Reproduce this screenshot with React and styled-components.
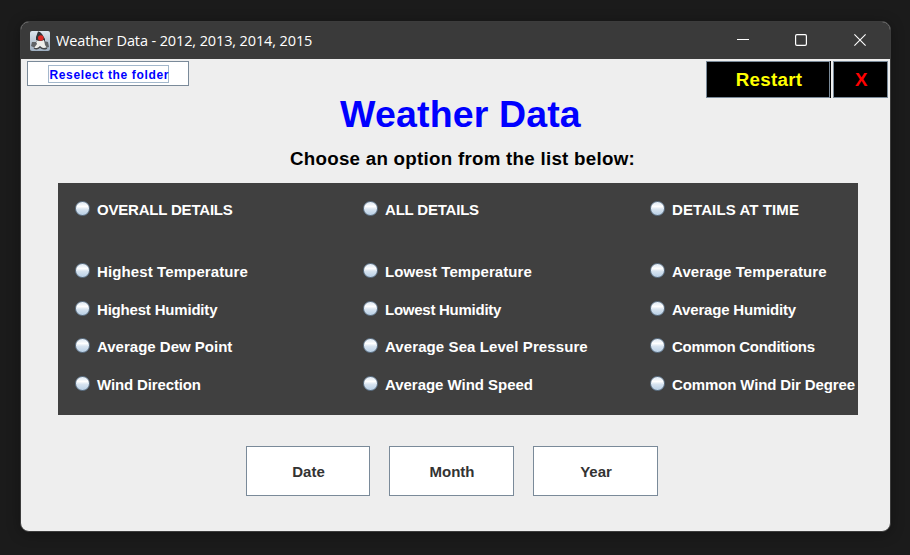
import React from "react";
import styled, { createGlobalStyle } from "styled-components";

const GlobalStyle = createGlobalStyle`
  * { box-sizing: border-box; }
  html, body { margin: 0; padding: 0; overflow: hidden; background: #1b1b1b; }
`;

const Desktop = styled.div`
  width: 910px;
  height: 555px;
  padding: 21px 19px 23px 20px;
  background: #1b1b1b;
  font-family: "Liberation Sans", Arial, sans-serif;
  font-weight: 700;
`;

const Window = styled.main`
  display: flex;
  flex-direction: column;
  width: 871px;
  height: 511px;
  border: 1px solid #3c3c3c;
  border-radius: 9px;
  overflow: hidden;
  background: #eeeeee;
  box-shadow: 0 2px 14px rgba(0, 0, 0, 0.3);
`;

const TitleBar = styled.header`
  display: flex;
  align-items: center;
  flex: 0 0 37px;
  padding-left: 9px;
  background: #3a3a3a;
  color: #ffffff;
`;

const WindowTitle = styled.h1`
  flex: 1;
  margin: 0 0 0 6px;
  font: 400 14.5px/20px "Open Sans", "Noto Sans", sans-serif;
  letter-spacing: -0.12px;
`;

const Controls = styled.div`
  display: flex;
  padding: 0 1px 1px 0;
`;

const Control = styled.button`
  display: grid;
  place-items: center;
  width: 58.5px;
  height: 35px;
  padding: 0;
  border: 0;
  background: transparent;
`;

const Toolbar = styled.nav`
  display: flex;
  align-items: flex-start;
  height: 39px;
  padding: 2px 2px 0 6px;
`;

const FolderButton = styled.button`
  display: grid;
  place-items: center;
  width: 162px;
  height: 25px;
  margin-right: auto;
  padding: 0;
  border: 1px solid #7a8a99;
  background: #ffffff;
  color: #0000ff;
  font: inherit;
`;

const FocusLabel = styled.span`
  width: 121px;
  height: 18px;
  border: 1px solid #a3b8cc;
  font-size: 12px;
  line-height: 18px;
  letter-spacing: 0.64px;
  white-space: nowrap;
  text-align: left;
  padding-left: 1px;
`;

const BlackButton = styled.button`
  width: ${(p) => p.$width}px;
  height: 37px;
  margin-left: ${(p) => p.$gap || 0}px;
  padding: 1px 0 0 2px;
  border: 1px solid #7a8a99;
  box-shadow: ${(p) => (p.$edge ? "1px 0 0 #000" : "none")};
  background: #000000;
  color: ${(p) => p.$color};
  font: inherit;
  font-size: 18.75px;
  letter-spacing: 0.3px;
`;

const Heading = styled.h2`
  margin: -6px 0 0;
  padding-left: 10px;
  color: #0000ff;
  font-size: 37.5px;
  line-height: 44px;
  letter-spacing: 0.15px;
  text-align: center;
`;

const Prompt = styled.p`
  margin: 12px 0 0;
  padding-left: 14px;
  color: #000000;
  font-size: 18.75px;
  line-height: 22px;
  letter-spacing: 0.26px;
  text-align: center;
`;

const OptionPanel = styled.section`
  display: grid;
  grid-template-columns: 288px 287px 208px;
  grid-template-rows: 62px 38px 37px 38px 37px;
  width: 800px;
  height: 232px;
  margin: 13px 0 0 37px;
  padding: 17px 0 0 17px;
  background: #404040;
`;

const Option = styled.label`
  display: flex;
  align-items: flex-start;
  color: #ffffff;
  font-size: 15px;
  line-height: 20px;
  letter-spacing: ${(p) => p.$tracking}px;
  white-space: nowrap;
`;

const Radio = styled.input`
  appearance: none;
  flex: none;
  width: 15px;
  height: 15px;
  margin: 1px 7px 0 0;
  border: 1px solid #60758a;
  border-radius: 50%;
  background: linear-gradient(#dce7f2 0%, #ffffff 35%, #d8e4f0 55%, #b8cfe5 100%);
`;

const Actions = styled.footer`
  display: grid;
  grid-template-columns: 124px 125px 125px;
  column-gap: 19px;
  margin: 31px 0 0 225px;
`;

const ActionButton = styled.button`
  height: 50px;
  padding: 1px 0 0 1px;
  border: 1px solid #7a8a99;
  background: #ffffff;
  color: #333333;
  font: inherit;
  font-size: 15px;
`;

const options = [
  ["OVERALL DETAILS", -0.2], ["ALL DETAILS", -0.2], ["DETAILS AT TIME", 0.1],
  ["Highest Temperature", 0.11], ["Lowest Temperature", 0.07], ["Average Temperature", 0.11],
  ["Highest Humidity", -0.19], ["Lowest Humidity", -0.26], ["Average Humidity", -0.19],
  ["Average Dew Point", 0], ["Average Sea Level Pressure", 0.09], ["Common Conditions", -0.28],
  ["Wind Direction", -0.13], ["Average Wind Speed", -0.03], ["Common Wind Dir Degree", -0.13],
];

function DukeIcon() {
  return (
    <svg width="20" height="20" viewBox="0 0 20 20">
      <defs>
        <linearGradient id="tile" x2="0" y2="1">
          <stop stopColor="#dce5ed" />
          <stop offset="1" stopColor="#9eafc1" />
        </linearGradient>
      </defs>
      <rect width="20" height="20" rx="2" fill="url(#tile)" />
      <path d="M8 0.5Q10 0 12 3L15 8V11H6V6Z" fill="#303338" />
      <path d="M6 11L2 11L1 15L5 17L8 14ZM14 10L18 11L19 16L16 17L13 14Z" fill="#606468" />
      <path d="M6 9Q10 11 14 9L15 14L17 17Q13 18 10 15Q7 18 4 17L7 13Z" fill="#ededea" />
      <path d="M4 17Q7 19 10 16Q13 19 17 17" fill="none" stroke="#45484b" strokeWidth="1.4" />
      <circle cx="10.8" cy="7" r="2.8" fill="#df2924" />
    </svg>
  );
}

export default function App() {
  return (
    <>
      <GlobalStyle />
      <Desktop>
        <Window>
          <TitleBar>
            <DukeIcon />
            <WindowTitle>Weather Data - 2012, 2013, 2014, 2015</WindowTitle>
            <Controls>
              <Control aria-label="Minimize">
                <svg width="12" height="12"><path d="M0 5.5H12" stroke="#fff" /></svg>
              </Control>
              <Control aria-label="Maximize">
                <svg width="12" height="12"><rect x=".6" y=".6" width="10.8" height="10.8" rx="1.3" fill="none" stroke="#fff" strokeWidth="1.2" /></svg>
              </Control>
              <Control aria-label="Close">
                <svg width="12" height="12"><path d="M.4 .4L11.6 11.6M11.6 .4L.4 11.6" stroke="#fff" strokeWidth="1.1" /></svg>
              </Control>
            </Controls>
          </TitleBar>
          <Toolbar>
            <FolderButton><FocusLabel>Reselect the folder</FocusLabel></FolderButton>
            <BlackButton $width={124} $color="#ffff00" $edge>Restart</BlackButton>
            <BlackButton $width={55} $gap={3} $color="#ff0000">X</BlackButton>
          </Toolbar>
          <Heading>Weather Data</Heading>
          <Prompt>Choose an option from the list below:</Prompt>
          <OptionPanel>
            {options.map(([label, tracking]) => (
              <Option key={label} $tracking={tracking}><Radio type="radio" name="report" />{label}</Option>
            ))}
          </OptionPanel>
          <Actions>
            <ActionButton>Date</ActionButton>
            <ActionButton>Month</ActionButton>
            <ActionButton>Year</ActionButton>
          </Actions>
        </Window>
      </Desktop>
    </>
  );
}
